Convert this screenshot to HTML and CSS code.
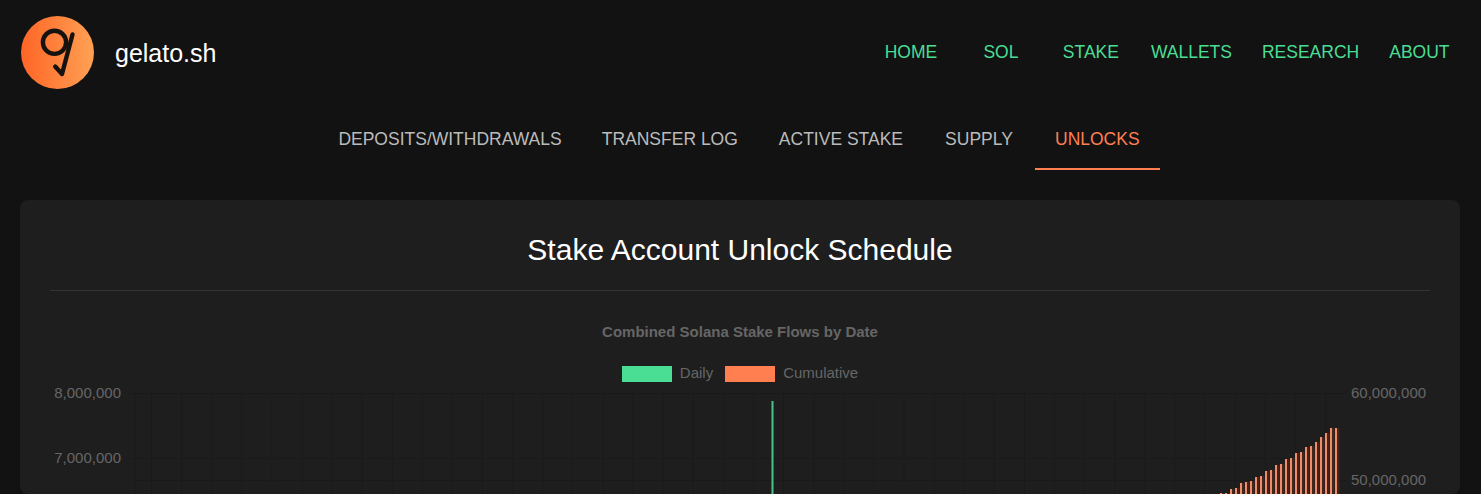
FILE: index.html
```html
<!DOCTYPE html>
<html lang="en">
<head>
    <meta charset="UTF-8">
    <title>gelato.sh - Stake Account Unlock Schedule</title>
    <link rel="stylesheet" href="styles.css">
</head>
<body>

<header class="top-bar">
    <a class="brand" href="#">
        <svg class="brand-logo" viewBox="0 0 73 73" width="73" height="73">
            <defs>
                <linearGradient id="logoFill" x1="0" y1="0" x2="1" y2="0">
                    <stop offset="0" stop-color="#ff6526"/>
                    <stop offset="1" stop-color="#ffa154"/>
                </linearGradient>
            </defs>
            <circle cx="36.5" cy="36.5" r="36.5" fill="url(#logoFill)"/>
            <circle cx="33.5" cy="26.3" r="11.6" fill="none" stroke="#161210" stroke-width="4.4"/>
            <path d="M51.5 18.5 L41 58 L34.2 50.6" fill="none" stroke="#161210" stroke-width="4.4" stroke-linecap="round" stroke-linejoin="round"/>
        </svg>
        <span class="brand-name">gelato.sh</span>
    </a>
    <nav class="main-nav">
        <a href="#">HOME</a>
        <a href="#">SOL</a>
        <a href="#">STAKE</a>
        <a href="#">WALLETS</a>
        <a href="#">RESEARCH</a>
        <a href="#">ABOUT</a>
    </nav>
</header>

<nav class="sub-nav">
    <a href="#">DEPOSITS/WITHDRAWALS</a>
    <a href="#" class="wide-end">TRANSFER LOG</a>
    <a href="#">ACTIVE STAKE</a>
    <a href="#" class="fixed">SUPPLY</a>
    <a href="#" class="active">UNLOCKS</a>
</nav>

<main class="card">
    <h1 class="card-title">Stake Account Unlock Schedule</h1>

    <h2 class="chart-title">Combined Solana Stake Flows by Date</h2>
    <div class="legend">
        <span class="legend-box daily"></span>
        <span class="legend-label">Daily</span>
        <span class="legend-box cumulative"></span>
        <span class="legend-label">Cumulative</span>
    </div>

    <svg class="plot" width="1380" height="109" viewBox="0 0 1380 109">
        <defs>
            <pattern id="gridCols" x="101" y="0" width="30.1" height="109" patternUnits="userSpaceOnUse">
                <rect x="0" y="0" width="1" height="109" fill="#1a1a1a"/>
            </pattern>
        </defs>
        <rect x="101" y="8" width="1190" height="101" fill="url(#gridCols)"/>
        <path class="grid-line" d="M77 8.5H1296M85 8V109M77 73.5H1290M85 95.5H1296"/>

        <text class="tick" x="71" y="13" text-anchor="end">8,000,000</text>
        <text class="tick" x="71" y="78" text-anchor="end">7,000,000</text>
        <text class="tick" x="1301" y="13">60,000,000</text>
        <text class="tick" x="1301" y="100">50,000,000</text>

        <path class="bar-daily" d="M722.5 109V16"/>

        <path class="bar-shade" d="M1173 109V108M1178 109V108M1183 109V104M1188 109V103M1193 109V98M1198 109V97M1203 109V96M1208 109V92M1213 109V91M1218 109V86M1223 109V85M1228 109V80M1233 109V79M1238 109V74M1243 109V73M1248 109V68M1253 109V67M1258 109V62M1263 109V61M1268 109V57M1273 109V52M1278 109V48M1283 109V43M1288 109V43"/>
        <path class="bar-cumulative" d="M1171 109V108M1176 109V108M1181 109V104M1186 109V103M1191 109V98M1196 109V97M1201 109V96M1206 109V92M1211 109V91M1216 109V86M1221 109V85M1226 109V80M1231 109V79M1236 109V74M1241 109V73M1246 109V68M1251 109V67M1256 109V62M1261 109V61M1266 109V57M1271 109V52M1276 109V48M1281 109V43M1286 109V43"/>
    </svg>
</main>

</body>
</html>
```

FILE: styles.css
```css
html, body {
    height: 100%;
}

body {
    background-color: #121212;
    font-family: "Liberation Sans", Arial, sans-serif;
    margin: 0;
    padding: 0;
    overflow: hidden;
}

a {
    text-decoration: none;
}

.top-bar {
    display: flex;
    align-items: center;
    justify-content: space-between;
    padding: 16px 31.5px 0 21px;
}

.brand {
    display: flex;
    align-items: center;
    gap: 21px;
}

.brand-logo {
    display: block;
}

.brand-name {
    color: #ffffff;
    font-size: 25px;
    margin-top: 2px;
}

.main-nav {
    display: flex;
    gap: 30px;
}

.main-nav a {
    min-width: 60px;
    text-align: center;
    color: #4ade94;
    font-size: 17.5px;
}

.sub-nav {
    display: flex;
    justify-content: center;
    margin-top: 20px;
    padding-right: 3px;
}

.sub-nav a {
    padding: 20px 20px 18px;
    text-align: center;
    color: #bbbbbb;
    font-size: 17.5px;
    border-bottom: 2px solid transparent;
}

.sub-nav a.wide-end {
    padding-right: 21px;
}

.sub-nav a.fixed {
    min-width: 112px;
    padding-left: 0;
    padding-right: 0;
}

.sub-nav a.active {
    color: #ff7f50;
    border-bottom-color: #ff7f50;
}

.card {
    margin: 30px 21px 0 20px;
    padding: 30px 30px 0;
    background-color: #1e1e1e;
    border-radius: 8px;
}

.card-title {
    margin: 3px 0 32px;
    padding-bottom: 23px;
    color: #ffffff;
    font-size: 30px;
    font-weight: normal;
    text-align: center;
    border-bottom: 1px solid #333333;
}

.chart-title {
    margin: 0;
    color: #666666;
    font-size: 15px;
    font-weight: bold;
    text-align: center;
}

.legend {
    display: flex;
    align-items: center;
    justify-content: center;
    margin-top: 23px;
    height: 18px;
    color: #666666;
    font-size: 15px;
}

.legend-box {
    width: 50px;
    height: 16px;
    margin-top: 4px;
    margin-right: 8px;
}

.legend-label {
    margin-right: 12px;
}

.legend-label:last-child {
    margin-right: 0;
}

.legend-box.daily {
    background-color: #4ade94;
}

.legend-box.cumulative {
    background-color: #ff7f50;
}

.plot {
    display: block;
    margin-top: 4px;
}

.grid-line {
    fill: none;
    stroke: #1a1a1a;
    stroke-width: 1;
}

.tick {
    fill: #666666;
    font-size: 15px;
}

.bar-daily {
    fill: none;
    stroke: #48c48a;
    stroke-width: 2;
}

.bar-cumulative {
    fill: none;
    stroke: #ee8d6c;
    stroke-width: 2;
}

.bar-shade {
    fill: none;
    stroke: #45241a;
    stroke-width: 3;
}
```
